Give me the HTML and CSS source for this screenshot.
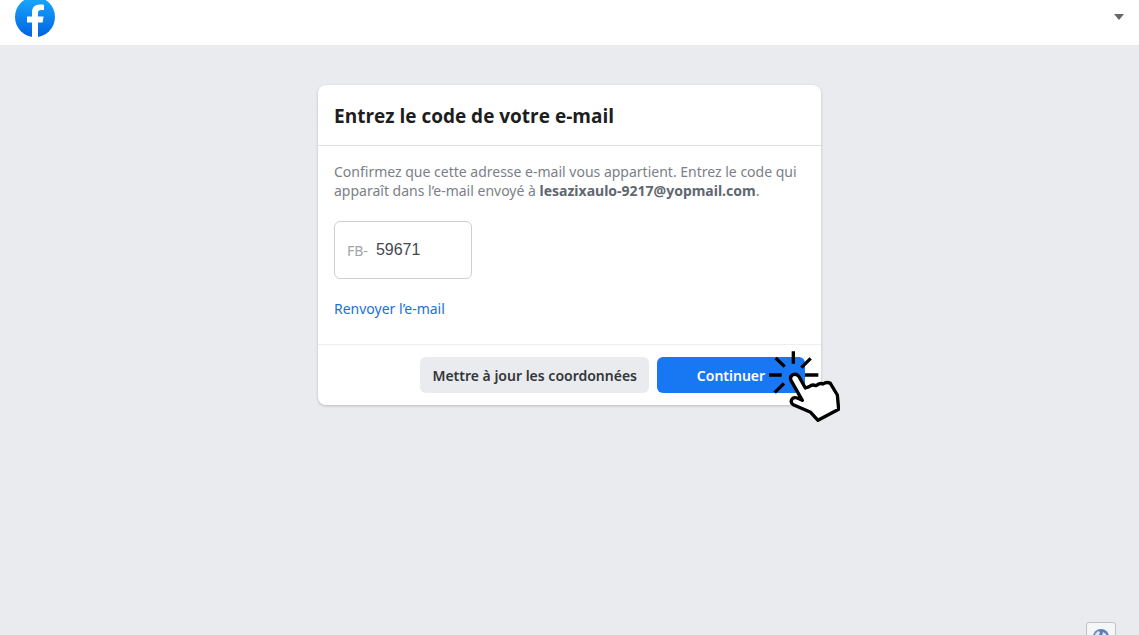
FILE: index.html
```
<!DOCTYPE html>
<html lang="fr">
<head>
  <meta charset="UTF-8">
  <meta name="viewport" content="width=device-width, initial-scale=1.0">
  <title>Entrez le code de votre e-mail</title>
  <link rel="stylesheet" href="styles.css">
</head>
<body>

  <header class="topbar">
    <a class="logo" href="#" aria-label="Facebook">
      <svg width="40" height="37" viewBox="0 3 40 37">
        <defs>
          <linearGradient id="logo-blue" x1="0" y1="0" x2="0" y2="1">
            <stop offset="0" stop-color="#19aaff" />
            <stop offset="1" stop-color="#0062e0" />
          </linearGradient>
        </defs>
        <circle cx="20" cy="20" r="20" fill="url(#logo-blue)" />
        <path fill="#fff" d="M17 40V25.500h-5v-6.100h5v-4.100c0-5.200 3-7.900 7.600-7.900 1.600 0 3 .1 4.400.4v5.100h-2.800c-2.400 0-3.200 1.200-3.200 3v3.500h5.600l-1 6.100H23V40z" />
      </svg>
    </a>
    <button class="menu" type="button" aria-label="Menu du compte">
      <svg width="12" height="8" viewBox="0 0 12 8">
        <path d="M1 1h10L6 7z" fill="#65676b" />
      </svg>
    </button>
  </header>

  <main>
    <form class="card">
      <h1>Entrez le code de votre e-mail</h1>
      <div class="card-body">
        <p>Confirmez que cette adresse e-mail vous appartient. Entrez le code qui apparaît dans l’e-mail envoyé à <strong>lesazixaulo-9217@yopmail.com</strong>.</p>
        <div class="code-box">
          <label for="code">FB-</label>
          <input type="text" id="code" value="59671" maxlength="5">
        </div>
        <a class="resend" href="#">Renvoyer l’e-mail</a>
      </div>
      <div class="card-footer">
        <button class="btn" type="button">Mettre à jour les coordonnées</button>
        <button class="btn btn-primary" type="submit">
          Continuer
          <!-- Click pointer -->
          <svg class="pointer" width="72" height="73" viewBox="84 30 216 219" fill="none" stroke="#000" stroke-width="10">
            <path d="M160 34v37M107 54l27 26M212 55l-28 28M87 105h38M195 105h40M104 158l28-28" />
            <path fill="#fff" stroke-linejoin="round" d="M196 144L177 110C168 96 147 104 153 121L187 181L172 174C153 169 149 188 160 194L212 217L234 241L296 208L292 165L271 130Q260 124 249 132Q239 127 228 137Q216 132 208 140Z" />
          </svg>
        </button>
      </div>
    </form>
  </main>

  <button class="chat-tab" type="button" aria-label="Langue">
    <svg width="18" height="18" viewBox="0 0 18 18">
      <circle cx="9" cy="9" r="8" fill="#5f7fb8" />
      <path d="M3 6l3-3 2 1-1 3-3 2zM11 4l3 2 1 3-3 2-2-3z" fill="#dfe6f2" />
    </svg>
  </button>

</body>
</html>
```
FILE: styles.css
```
* {
  box-sizing: border-box;
}

body {
  margin: 0;
  min-height: 100vh;
  background-color: #e9ebee;
  font-family: "Noto Sans", "Open Sans", sans-serif;
  font-size: 14px;
  color: #1c1e21;
}

button {
  font-family: inherit;
  cursor: pointer;
}

a {
  color: #216fdb;
  text-decoration: none;
}

/* Top bar */
.topbar {
  display: flex;
  justify-content: space-between;
  align-items: flex-start;
  height: 45px;
  padding: 0 14px 0 15px;
  background-color: #fff;
}

.logo svg,
.menu svg {
  display: block;
}

.menu {
  padding: 13px 0;
  border: none;
  background: none;
}

main {
  padding: 40px 16px;
}

/* Code confirmation card */
.card {
  max-width: 503px;
  margin: 0 auto;
  border-radius: 8px;
  background-color: #fff;
  box-shadow: 0 1px 3px rgba(0, 0, 0, 0.2);
}

h1 {
  margin: 0;
  padding: 17px 16px 15px;
  border-bottom: 1px solid #dddfe2;
  font-family: "Open Sans", "Noto Sans", sans-serif;
  font-size: 19px;
  line-height: 28px;
}

.card-body {
  padding: 16px 16px 26px;
}

p {
  margin: 0;
  color: #7b8087;
  line-height: 19px;
}

strong {
  color: #606770;
}

.code-box {
  display: flex;
  align-items: center;
  width: 138px;
  height: 58px;
  margin: 21px 0 20px;
  padding: 0 12px;
  border: 1px solid #ccd0d5;
  border-radius: 6px;
}

.code-box label {
  color: #a0a3a8;
}

.code-box input {
  flex: 1;
  min-width: 0;
  padding: 0 0 0 8px;
  border: none;
  outline: none;
  font-family: "Liberation Sans", Arial, sans-serif;
  font-size: 16px;
  color: #444950;
}

.resend {
  display: block;
  line-height: 19px;
}

.card-footer {
  display: flex;
  justify-content: flex-end;
  gap: 8px;
  padding: 12px 16px;
  border-top: 1px solid #eceef0;
}

.btn {
  position: relative;
  height: 36px;
  padding: 0 12px;
  border: none;
  border-radius: 6px;
  background-color: #e9ebee;
  font-size: 14px;
  font-weight: 600;
  color: #333639;
}

.btn-primary {
  min-width: 148px;
  background-color: #1877f2;
  color: #fff;
}

.pointer {
  position: absolute;
  top: -7px;
  left: 111px;
}

/* Tab peeking in at the bottom of the window */
.chat-tab {
  position: fixed;
  right: 23px;
  bottom: -13px;
  width: 30px;
  height: 26px;
  padding: 5px;
  border: 1px solid #bec3c9;
  border-radius: 3px;
  background-color: #f5f6f7;
}
```
